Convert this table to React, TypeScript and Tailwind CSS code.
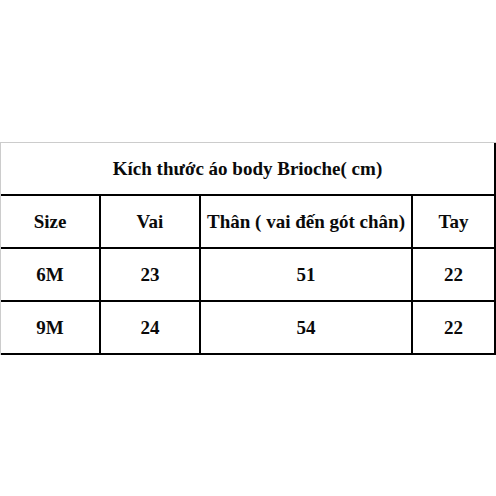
const rows = [
  ["Size", "Vai", "Thân ( vai đến gót chân)", "Tay"],
  ["6M", "23", "51", "22"],
  ["9M", "24", "54", "22"],
];

const widths = ["w-[100px]", "w-[100px]", "w-[212px]", "w-[83px]"];

export default function App() {
  return (
    <div className="w-[496px] h-[496px] bg-white font-['Liberation_Serif','Times_New_Roman',serif] font-bold text-[19px] text-[#0a0a0a]">
      <div className="h-[142px]" />
      <div className="w-[496px] border-t border-l border-[#cccccc]">
        <div className="flex h-[53px] items-center justify-center pt-[1px] border-r-2 border-b-2 border-black">
          Kích thước áo body Brioche( cm)
        </div>
        {rows.map((row, i) => (
          <div key={i} className="flex h-[53px] border-b-2 border-black">
            {row.map((cell, j) => (
              <div
                key={j}
                className={`${widths[j]} flex items-center justify-center pt-[2px] border-r-2 border-black`}
              >
                {cell}
              </div>
            ))}
          </div>
        ))}
      </div>
    </div>
  );
}
